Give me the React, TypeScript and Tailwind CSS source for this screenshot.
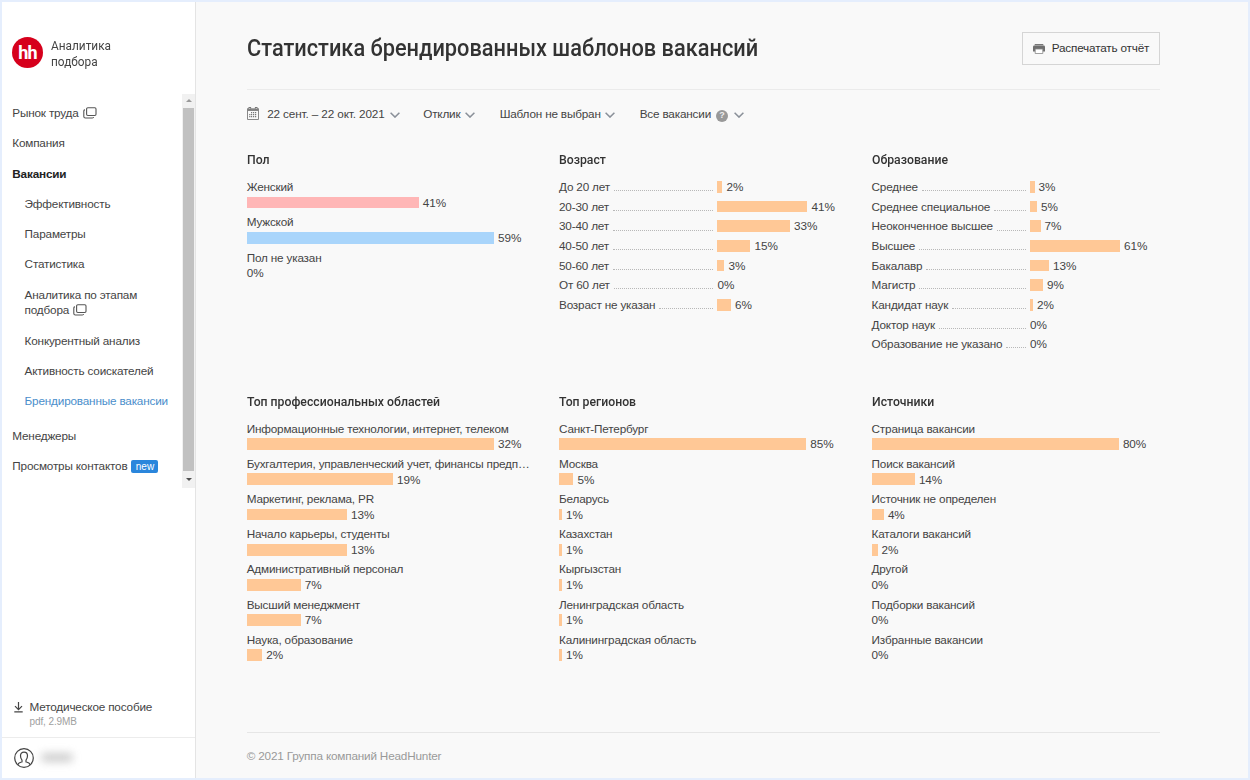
import React from "react";

type Row = { label: string; value: number; bar: number };

const gender: (Row & { color: string })[] = [
  { label: "Женский", value: 41, bar: 172, color: "bg-[#ffb6b6]" },
  { label: "Мужской", value: 59, bar: 247.3, color: "bg-[#a9d5fb]" },
  { label: "Пол не указан", value: 0, bar: 0, color: "" },
];

const age: Row[] = [
  { label: "До 20 лет", value: 2, bar: 5 },
  { label: "20-30 лет", value: 41, bar: 90 },
  { label: "30-40 лет", value: 33, bar: 72.5 },
  { label: "40-50 лет", value: 15, bar: 33 },
  { label: "50-60 лет", value: 3, bar: 7 },
  { label: "От 60 лет", value: 0, bar: 0 },
  { label: "Возраст не указан", value: 6, bar: 13.5 },
];

const education: Row[] = [
  { label: "Среднее", value: 3, bar: 4.5 },
  { label: "Среднее специальное", value: 5, bar: 7 },
  { label: "Неоконченное высшее", value: 7, bar: 10.5 },
  { label: "Высшее", value: 61, bar: 90 },
  { label: "Бакалавр", value: 13, bar: 19 },
  { label: "Магистр", value: 9, bar: 13 },
  { label: "Кандидат наук", value: 2, bar: 3 },
  { label: "Доктор наук", value: 0, bar: 0 },
  { label: "Образование не указано", value: 0, bar: 0 },
];

const areas: Row[] = [
  { label: "Информационные технологии, интернет, телеком", value: 32, bar: 247.3 },
  { label: "Бухгалтерия, управленческий учет, финансы предп…", value: 19, bar: 146.3 },
  { label: "Маркетинг, реклама, PR", value: 13, bar: 100.3 },
  { label: "Начало карьеры, студенты", value: 13, bar: 100.3 },
  { label: "Административный персонал", value: 7, bar: 54 },
  { label: "Высший менеджмент", value: 7, bar: 54 },
  { label: "Наука, образование", value: 2, bar: 15.5 },
];

const regions: Row[] = [
  { label: "Санкт-Петербург", value: 85, bar: 247.3 },
  { label: "Москва", value: 5, bar: 14.5 },
  { label: "Беларусь", value: 1, bar: 3 },
  { label: "Казахстан", value: 1, bar: 3 },
  { label: "Кыргызстан", value: 1, bar: 3 },
  { label: "Ленинградская область", value: 1, bar: 3 },
  { label: "Калининградская область", value: 1, bar: 3 },
];

const sources: Row[] = [
  { label: "Страница вакансии", value: 80, bar: 247.3 },
  { label: "Поиск вакансий", value: 14, bar: 43.3 },
  { label: "Источник не определен", value: 4, bar: 12.3 },
  { label: "Каталоги вакансий", value: 2, bar: 6 },
  { label: "Другой", value: 0, bar: 0 },
  { label: "Подборки вакансий", value: 0, bar: 0 },
  { label: "Избранные вакансии", value: 0, bar: 0 },
];

function Bar({ width, color = "bg-[#ffc896]" }: { width: number; color?: string }) {
  if (!width) return null;
  return <span className={`mr-[4px] h-[11.7px] shrink-0 ${color}`} style={{ width }} />;
}

function Heading({ children }: { children: React.ReactNode }) {
  return (
    <h2 className="mb-[10.200px] h-[19px] origin-left scale-x-[0.957] font-[Roboto,sans-serif] text-[12.8px] leading-[19px] font-medium tracking-normal whitespace-nowrap text-[#333]">
      {children}
    </h2>
  );
}

function StackedChart({ title, rows }: { title: string; rows: (Row & { color?: string })[] }) {
  return (
    <section className="w-[284px]">
      <Heading>{title}</Heading>
      {rows.map((r) => (
        <div key={r.label} className="mb-[3.9px]">
          <div className="h-[15.65px] leading-[15.65px] whitespace-nowrap">{r.label}</div>
          <div className="flex h-[15.65px] items-center leading-[15.65px]">
            <Bar width={r.bar} color={r.color} />
            <span className="tracking-[-0.05px]">{r.value}%</span>
          </div>
        </div>
      ))}
    </section>
  );
}

function LeaderChart({ title, rows }: { title: string; rows: Row[] }) {
  return (
    <section className="w-[284px]">
      <Heading>{title}</Heading>
      {rows.map((r) => (
        <div key={r.label} className="mb-[4px] flex h-[15.65px] items-center leading-[15.65px]">
          <div className="mr-[4px] flex h-full w-[154.5px] items-end whitespace-nowrap">
            <span className="mr-[4px]">{r.label}</span>
            <span className="mb-[3.6px] h-px flex-1 border-b border-dotted border-[#b8b8b8]" />
          </div>
          <Bar width={r.bar} />
          <span className="tracking-[-0.05px]">{r.value}%</span>
        </div>
      ))}
    </section>
  );
}

function WindowsIcon() {
  return (
    <svg className="inline-block h-[12px] w-[14px] shrink-0" viewBox="0 0 14 12" fill="none" stroke="#555" strokeWidth="1.1">
      <rect x="3.6" y="0.7" width="9.4" height="7.8" rx="1.2" />
      <path d="M2 2.900H1.700Q.8 2.900.8 3.900v5.500q0 1.600 1.600 1.600h6.900q1.100 0 1.300-1" />
    </svg>
  );
}

function Chevron() {
  return (
    <svg className="mt-[2px] h-[6px] w-[10px] shrink-0" viewBox="0 0 10 6" fill="none" stroke="#8a9099" strokeWidth="1.5">
      <path d="M.6.7 5 5.1 9.400.7" />
    </svg>
  );
}

function CalendarIcon() {
  return (
    <svg className="mb-[1px] h-[13px] w-[12px] shrink-0" viewBox="0 0 12 13">
      <path d="M.5 3h11v9.500H.5z" fill="none" stroke="#888" />
      <path d="M0 1.300h12V4H0z" fill="#858585" />
      <path d="M1.500 0h2.600v2.500H1.500zM7.900 0h2.600v2.500H7.900z" fill="#777" />
      <path d="M2.300 1h1v1h-1zM8.700 1h1v1h-1z" fill="#ddd" />
      <path
        d="M6 5h1.200v1.200H6zM8 5h1.200v1.200H8zM4 5h1.200v1.200H4zM2.200 7h1.200v1.200H2.200zM4 7h1.200v1.200H4zM6 7h1.200v1.200H6zM8 7h1.200v1.200H8zM2.200 9h1.200v1.200H2.200zM4 9h1.200v1.200H4zM6 9h1.200v1.200H6zM8 9h1.200v1.200H8z"
        fill="#777"
      />
    </svg>
  );
}

function PrinterIcon() {
  return (
    <svg className="h-[10px] w-[12px] shrink-0" viewBox="0 0 12 10">
      <path d="M1.700 0h8.600v1.300H1.700z" fill="#777" />
      <path d="M1.200 1.500h9.600q1.200 0 1.200 1.200V7.500H0V2.700Q0 1.500 1.200 1.500z" fill="#6f6f6f" />
      <path d="M2.200 5h7.600v4.500H2.200z" fill="#fff" stroke="#888" strokeWidth=".8" />
    </svg>
  );
}

function Sidebar() {
  return (
    <aside className="flex w-[194px] shrink-0 flex-col border-r border-[#e4e4e4] bg-white">
      <div className="flex h-[92.300px] shrink-0 items-start pt-[35px] pl-[10px]">
        <div className="flex h-[31px] w-[31px] shrink-0 items-center justify-center rounded-full bg-[#d6001c] pt-[1px] font-[Roboto,sans-serif] text-[18px] leading-none font-bold tracking-[-0.8px] text-white">
          hh
        </div>
        <div className="mt-[1px] ml-[8px] origin-left scale-x-[0.925] font-[Roboto,sans-serif] text-[12.8px] leading-[15.7px] tracking-normal text-[#444]">
          Аналитика
          <br />
          подбора
        </div>
      </div>
      <div className="flex h-[394px] shrink-0">
        <nav className="w-[180px] pl-[10.300px] leading-[15.65px] whitespace-nowrap">
          <div className="flex items-center pt-[10.900px]">
            Рынок труда
            <span className="ml-[4.500px] flex">
              <WindowsIcon />
            </span>
          </div>
          <div className="pt-[14.600px]">Компания</div>
          <div className="pt-[14.600px] font-bold text-[#222]">Вакансии</div>
          <div className="pl-[12.300px]">
            <div className="pt-[14.600px]">Эффективность</div>
            <div className="pt-[14.600px]">Параметры</div>
            <div className="pt-[14.600px]">Статистика</div>
            <div className="pt-[14.600px]">
              Аналитика по этапам
              <div className="flex items-center">
                подбора
                <span className="ml-[4px] flex">
                  <WindowsIcon />
                </span>
              </div>
            </div>
            <div className="pt-[14.600px]">Конкурентный анализ</div>
            <div className="pt-[14.600px]">Активность соискателей</div>
            <div className="pt-[14.600px] text-[#4a8ecb]">Брендированные вакансии</div>
          </div>
          <div className="pt-[19px]">Менеджеры</div>
          <div className="flex items-center pt-[14.600px]">
            Просмотры контактов
            <span className="mt-[2px] ml-[4px] flex h-[13px] w-[27px] items-center justify-center rounded-[2px] bg-[#2a86dc] text-[10px] leading-none tracking-normal text-white">
              new
            </span>
          </div>
        </nav>
        <div className="flex w-[13px] flex-col items-center bg-[#f1f1f1]">
          <div className="flex h-[13.400px] items-center">
            <svg className="h-[3px] w-[6px]" viewBox="0 0 6 3">
              <path d="M0 3 3 0l3 3z" fill="#999" />
            </svg>
          </div>
          <div className="w-[11px] flex-1 bg-[#c1c1c1]" />
          <div className="flex h-[17.300px] items-center">
            <svg className="h-[3px] w-[6px]" viewBox="0 0 6 3">
              <path d="M0 0l3 3 3-3z" fill="#505050" />
            </svg>
          </div>
        </div>
      </div>
      <div className="flex-1" />
      <div className="flex h-[38.800px] shrink-0 border-b border-[#ececec] pl-[12px]">
        <svg className="mt-[3px] h-[11px] w-[9px]" viewBox="0 0 9 11" fill="none" stroke="#444" strokeWidth="1.200">
          <path d="M4.500 0v7.500M1 4.200l3.500 3.500L8 4.200M.3 9.900h8.400" />
        </svg>
        <div className="ml-[6.500px]">
          <div className="leading-[15.65px]">Методическое пособие</div>
          <div className="text-[10px] leading-[14px] tracking-[-0.1px] text-[#a0a0a0]">pdf, 2.9MB</div>
        </div>
      </div>
      <div className="flex h-[40px] shrink-0 items-center pl-[12px]">
        <svg className="h-[20px] w-[20px]" viewBox="0 0 20 20" fill="none" stroke="#444" strokeWidth="1.200">
          <circle cx="10" cy="10" r="9.300" />
          <path d="M3.800 16.800c.4-2 2-2.300 4.200-2.900v-1.700C6.900 11 6.500 9.500 6.500 7.800 6.500 5.600 7.800 4.100 10 4.100s3.500 1.500 3.500 3.700c0 1.700-.4 3.200-1.500 4.400v1.700c2.200.6 3.800.9 4.200 2.900" />
        </svg>
        <div className="mb-[2px] ml-[7px] h-[9px] w-[32px] rounded-full bg-[#b9b9b9] opacity-70 blur-[4px]" />
      </div>
    </aside>
  );
}

export default function App() {
  return (
    <div className="flex h-[780px] w-[1250px] overflow-hidden border-2 border-[#e5eefd] bg-[#f9f9f9] font-['Liberation_Sans',Arial,sans-serif] text-[11.740px] tracking-[-0.180px] text-[#444]">
      <Sidebar />
      <main className="flex flex-1 flex-col pl-[50.700px]">
        <header className="flex h-[88px] w-[913.500px] shrink-0 items-start justify-between border-b border-[#ebebeb]">
          <h1 className="mt-[30px] origin-left scale-x-[0.927] font-[Roboto,sans-serif] text-[23.500px] leading-[32px] font-medium tracking-normal whitespace-nowrap text-[#333]">
            Статистика брендированных шаблонов вакансий
          </h1>
          <button className="mt-[30px] flex h-[33px] w-[138px] items-center border border-[#d5d5d5] pl-[10px] tracking-[-0.180px] text-[#333]">
            <PrinterIcon />
            <span className="mb-[1px] ml-[6.500px] whitespace-nowrap">Распечатать отчёт</span>
          </button>
        </header>
        <div className="flex h-[60px] shrink-0 items-start pt-[16px] leading-[16px] whitespace-nowrap">
          <div className="flex w-[176.500px] items-center">
            <CalendarIcon />
            <span className="mr-[5px] ml-[8.500px] tracking-[-0.130px]">22 сент. – 22 окт. 2021</span>
            <Chevron />
          </div>
          <div className="flex w-[76.500px] items-center">
            <span className="mr-[4.500px]">Отклик</span>
            <Chevron />
          </div>
          <div className="flex w-[140px] items-center">
            <span className="mr-[4.500px]">Шаблон не выбран</span>
            <Chevron />
          </div>
          <div className="flex items-center">
            <span className="mr-[5px]">Все вакансии</span>
            <span className="mt-[3px] mr-[5.500px] flex h-[12px] w-[12px] items-center justify-center rounded-full bg-[#999] text-[9px] leading-none font-bold tracking-normal text-[#eee]">
              ?
            </span>
            <Chevron />
          </div>
        </div>
        <div className="grid grid-cols-[312.300px_312.600px_284px] grid-rows-[241.500px_auto]">
          <StackedChart title="Пол" rows={gender} />
          <LeaderChart title="Возраст" rows={age} />
          <LeaderChart title="Образование" rows={education} />
          <StackedChart title="Топ профессиональных областей" rows={areas} />
          <StackedChart title="Топ регионов" rows={regions} />
          <StackedChart title="Источники" rows={sources} />
        </div>
        <div className="flex-1" />
        <footer className="h-[46px] w-[913.500px] shrink-0 border-t border-[#e6e6e6] pt-[15px] leading-[16px] text-[#999]">
          © 2021 Группа компаний HeadHunter
        </footer>
      </main>
    </div>
  );
}
